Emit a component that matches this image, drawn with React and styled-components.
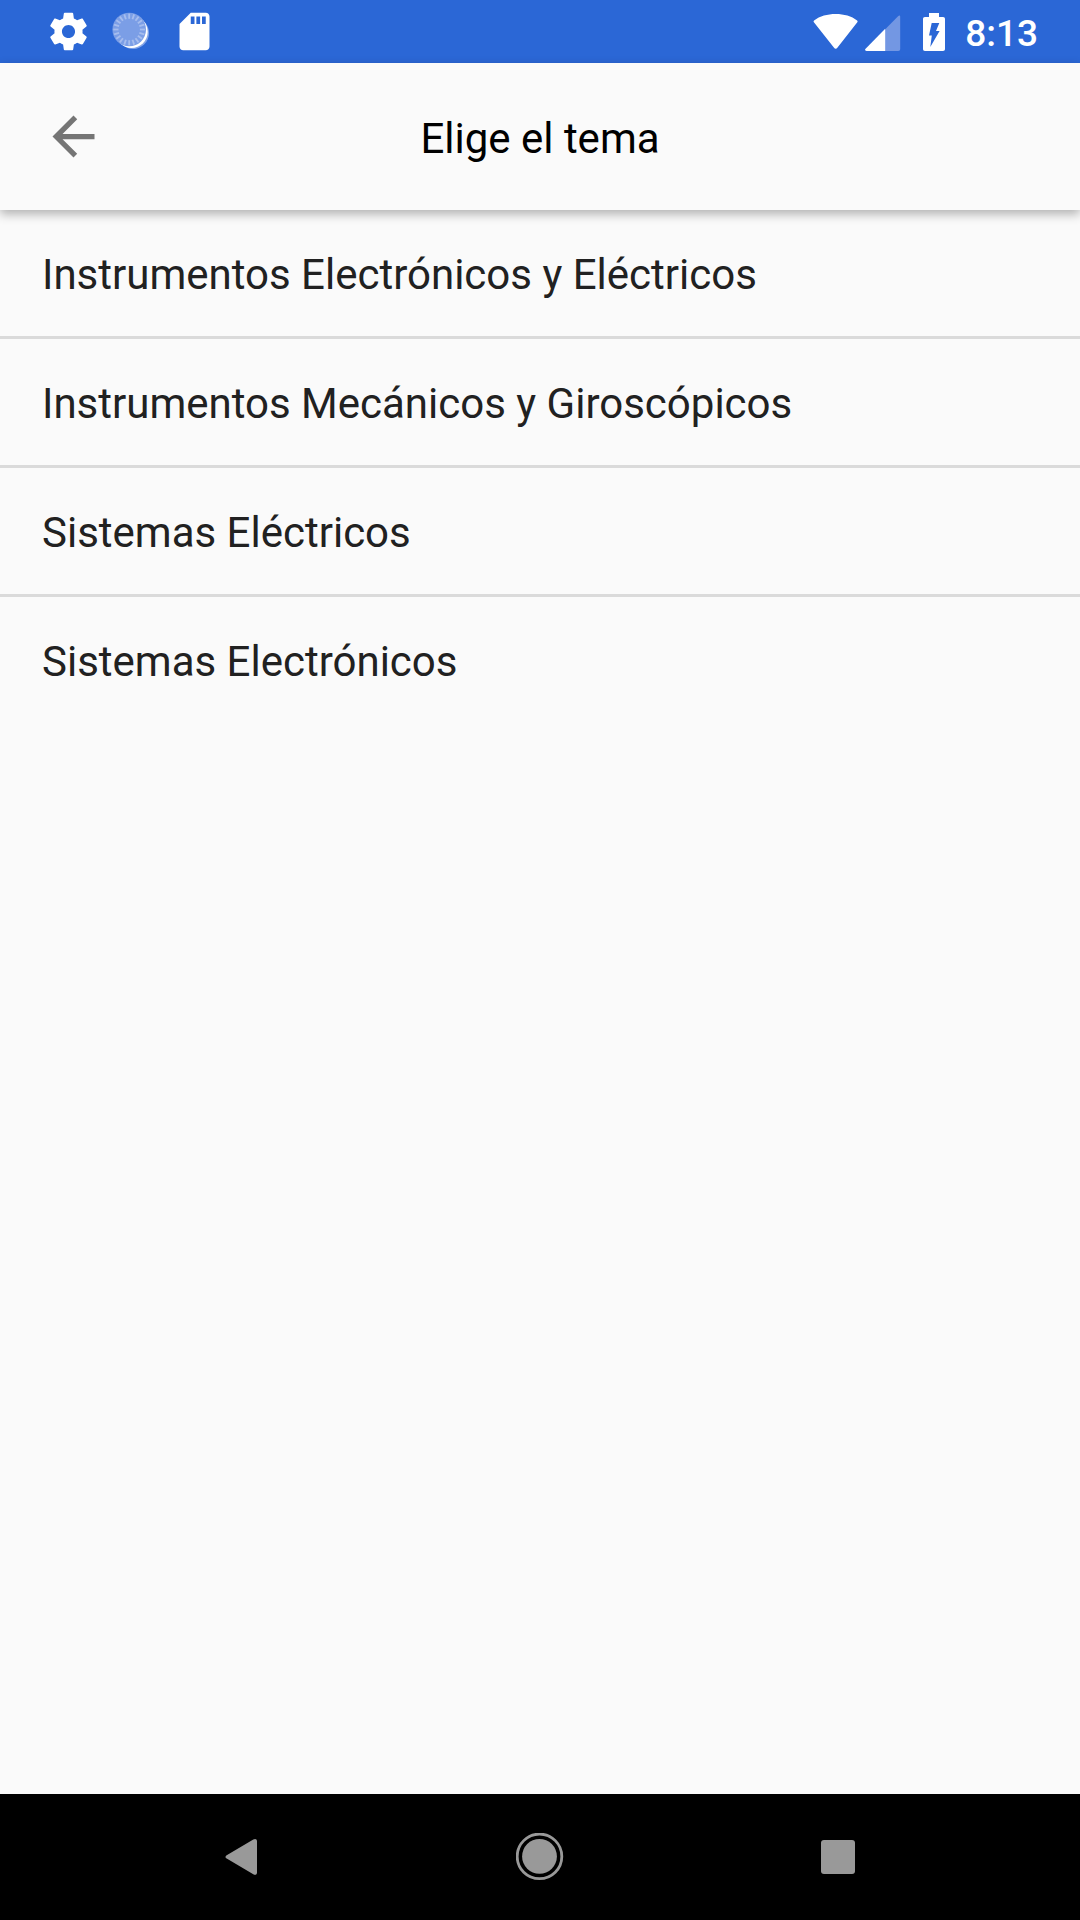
import React, { useState } from 'react';
import styled, { createGlobalStyle } from 'styled-components';

const topics = [
    "Instrumentos Electrónicos y Eléctricos",
    "Instrumentos Mecánicos y Giroscópicos",
    "Sistemas Eléctricos",
    "Sistemas Electrónicos",
];

const ticks = Array.from({ length: 20 }, (_, i) => i * 18);

const SettingsIcon = () => (
    <svg width="45" height="45" viewBox="0 0 24 24" fill="#fff">
        <path d="M19.43 12.98c.04-.32.07-.64.07-.98s-.03-.66-.07-.98l2.11-1.65c.19-.15.24-.42.12-.64l-2-3.46c-.12-.22-.39-.3-.61-.22l-2.49 1c-.52-.4-1.08-.73-1.69-.98l-.38-2.65C14.46 2.18 14.25 2 14 2h-4c-.25 0-.46.18-.49.42l-.38 2.65c-.61.25-1.17.59-1.69.98l-2.49-1c-.23-.09-.49 0-.61.22l-2 3.46c-.13.22-.07.49.12.64l2.11 1.65c-.04.32-.07.65-.07.98s.03.66.07.98l-2.11 1.65c-.19.15-.24.42-.12.64l2 3.46c.12.22.39.3.61.22l2.49-1c.52.4 1.08.73 1.69.98l.38 2.65c.03.24.24.42.49.42h4c.25 0 .46-.18.49-.42l.38-2.65c.61-.25 1.17-.59 1.69-.98l2.49 1c.23.09.49 0 .61-.22l2-3.46c.12-.22.07-.49-.12-.64l-2.11-1.65zM12 15.5c-1.93 0-3.5-1.57-3.5-3.5s1.57-3.5 3.5-3.5 3.5 1.57 3.5 3.5-1.57 3.5-3.5 3.5z" />
    </svg>
);

const SyncIcon = () => (
    <svg width="45" height="45" viewBox="0 0 45 45">
        <circle cx="24" cy="24" r="16" fill="#83a4e7" />
        <circle cx="22.5" cy="22.7" r="16.2" fill="#fff" />
        <circle cx="20.2" cy="20.5" r="16.8" fill="#7b9ee6" />
        {ticks.map((angle) => (
            <path
                key={angle}
                d="M20.2 4.6v5.2"
                stroke="#a6bdee"
                strokeWidth="1.8"
                transform={`rotate(${angle} 20.2 20.5)`}
            />
        ))}
    </svg>
);

const SdCardIcon = () => (
    <svg width="45" height="45" viewBox="0 0 24 24" fill="#fff">
        <path d="M18 2h-8L4.02 8 4 20c0 1.1.9 2 2 2h12c1.1 0 2-.9 2-2V4c0-1.1-.9-2-2-2zm-6 6h-2V4h2v4zm3 0h-2V4h2v4zm3 0h-2V4h2v4z" />
    </svg>
);

const WifiIcon = () => (
    <svg width="45" height="37" viewBox="0 0 46 38" fill="#fff">
        <path d="M1 7.6C7 3.2 14.6 1 23.2 1s16.2 2.2 22 6.6c.6.5.7 1.2.2 1.9L24.9 35.8c-.9 1.3-2.5 1.3-3.4 0L.8 9.5C.3 8.8.4 8.1 1 7.6z" />
    </svg>
);

const SignalIcon = () => (
    <svg width="36" height="38" viewBox="0 0 36 38">
        <path d="M20 16.5L33.3 3.1C34.3 2.1 35.2 2.5 35.2 3.8V36c0 1.3-.7 2-2 2H20z" fill="#7397e3" />
        <path d="M20.2 15.8V38H1.6C.1 38-.4 36.8.6 35.7z" fill="#fff" />
    </svg>
);

const BatteryIcon = () => (
    <svg width="22" height="38" viewBox="0 0 22 38">
        <path d="M6 0h10v4h4c1.3 0 2 .7 2 2v30c0 1.3-.7 2-2 2H2c-1.300 0-2-.7-2-2V6c0-1.300.7-2 2-2h4z" fill="#fff" />
        <path d="M8.7 10h7.6l-3.3 8h3.6L7.300 34l1.500-11.600H6z" fill="#2b67d6" />
    </svg>
);

const BackArrow = () => (
    <svg width="63" height="63" viewBox="0 0 24 24" fill="#757575">
        <path d="M20 11H7.83l5.59-5.59L12 4l-8 8 8 8 1.41-1.41L7.83 13H20v-2z" />
    </svg>
);

const App = () => {
    const [selected, setSelected] = useState(null);

    return (
        <>
            <GlobalStyle />
            <Screen>
                <StatusBar>
                    <Notifications>
                        <SettingsIcon />
                        <SyncIcon />
                        <SdCardIcon />
                    </Notifications>
                    <SystemIcons>
                        <WifiIcon />
                        <SignalIcon />
                        <BatteryIcon />
                        <Clock>8:13</Clock>
                    </SystemIcons>
                </StatusBar>
                <Header>
                    <BackButton aria-label="Atrás">
                        <BackArrow />
                    </BackButton>
                    <Title>Elige el tema</Title>
                </Header>
                <TopicList>
                    {topics.map((topic) => (
                        <TopicRow
                            key={topic}
                            aria-current={selected === topic}
                            onClick={() => setSelected(topic)}
                        >
                            {topic}
                        </TopicRow>
                    ))}
                </TopicList>
                <NavBar>
                    <svg width="33" height="38" viewBox="0 0 33 38" fill="#999">
                        <path d="M1.7 17.2L28.3 1.4C30.3.3 32 1 32 3.3V34.4c0 2.3-1.700 3.100-3.700 1.900L1.7 20.6c-1.600-1-1.600-2.400 0-3.400z" />
                    </svg>
                    <svg width="48" height="48" viewBox="0 0 48 48">
                        <circle cx="23.5" cy="23.4" r="22.3" fill="none" stroke="#999" strokeWidth="2.8" />
                        <circle cx="23.5" cy="23.4" r="17.4" fill="#999" />
                    </svg>
                    <RecentsSquare />
                </NavBar>
            </Screen>
        </>
    )
}

export default App;

const GlobalStyle = createGlobalStyle`
    body {
        margin: 0;
        background: #fafafa;
        font-family: Roboto, "Liberation Sans", sans-serif;
    }
    svg {
        display: block;
        flex-shrink: 0;
    }
`;

const Screen = styled.div`
    display: flex;
    flex-direction: column;
    width: 1080px;
    height: 1920px;
    background: #fafafa;
    overflow: hidden;
`;

const StatusBar = styled.div`
    display: flex;
    justify-content: space-between;
    align-items: center;
    box-sizing: border-box;
    height: 63px;
    padding: 0 42px 0 46px;
    background: #2b67d6;
`;

const Notifications = styled.div`
    display: flex;
    gap: 18px;
`;

const SystemIcons = styled.div`
    display: flex;
    align-items: center;

    svg + svg {
        margin-left: 7px;
    }
    svg:nth-of-type(3) {
        margin-left: 22px;
    }
`;

const Clock = styled.span`
    margin-left: 20px;
    padding-top: 4px;
    color: #fff;
    font-size: 37px;
    font-weight: 500;
    line-height: 44px;
`;

const Header = styled.header`
    display: grid;
    grid-template-columns: 147px 1fr 147px;
    align-items: center;
    height: 147px;
    background: #fafafa;
    box-shadow: 0 4px 10px rgba(0, 0, 0, 0.3);
    z-index: 1;
`;

const BackButton = styled.button`
    display: flex;
    padding: 0 42px;
    border: none;
    background: none;
`;

const Title = styled.h1`
    margin: 0;
    padding-top: 5px;
    color: #000;
    font-size: 42px;
    font-weight: 400;
    line-height: 50px;
    text-align: center;
`;

const TopicList = styled.ul`
    flex: 1;
    margin: 0;
    padding: 0;
    list-style: none;
`;

const TopicRow = styled.li`
    box-sizing: content-box;
    height: 126px;
    padding: 0 42px;
    color: #212121;
    font-size: 42px;
    line-height: 129px;
    cursor: pointer;

    &:not(:last-child) {
        border-bottom: 3px solid #dadada;
    }
`;

const NavBar = styled.nav`
    display: flex;
    justify-content: space-between;
    align-items: center;
    box-sizing: border-box;
    height: 126px;
    padding: 0 225px;
    background: #000;
`;

const RecentsSquare = styled.div`
    width: 34px;
    height: 34px;
    border-radius: 3px;
    background: #999;
`;
